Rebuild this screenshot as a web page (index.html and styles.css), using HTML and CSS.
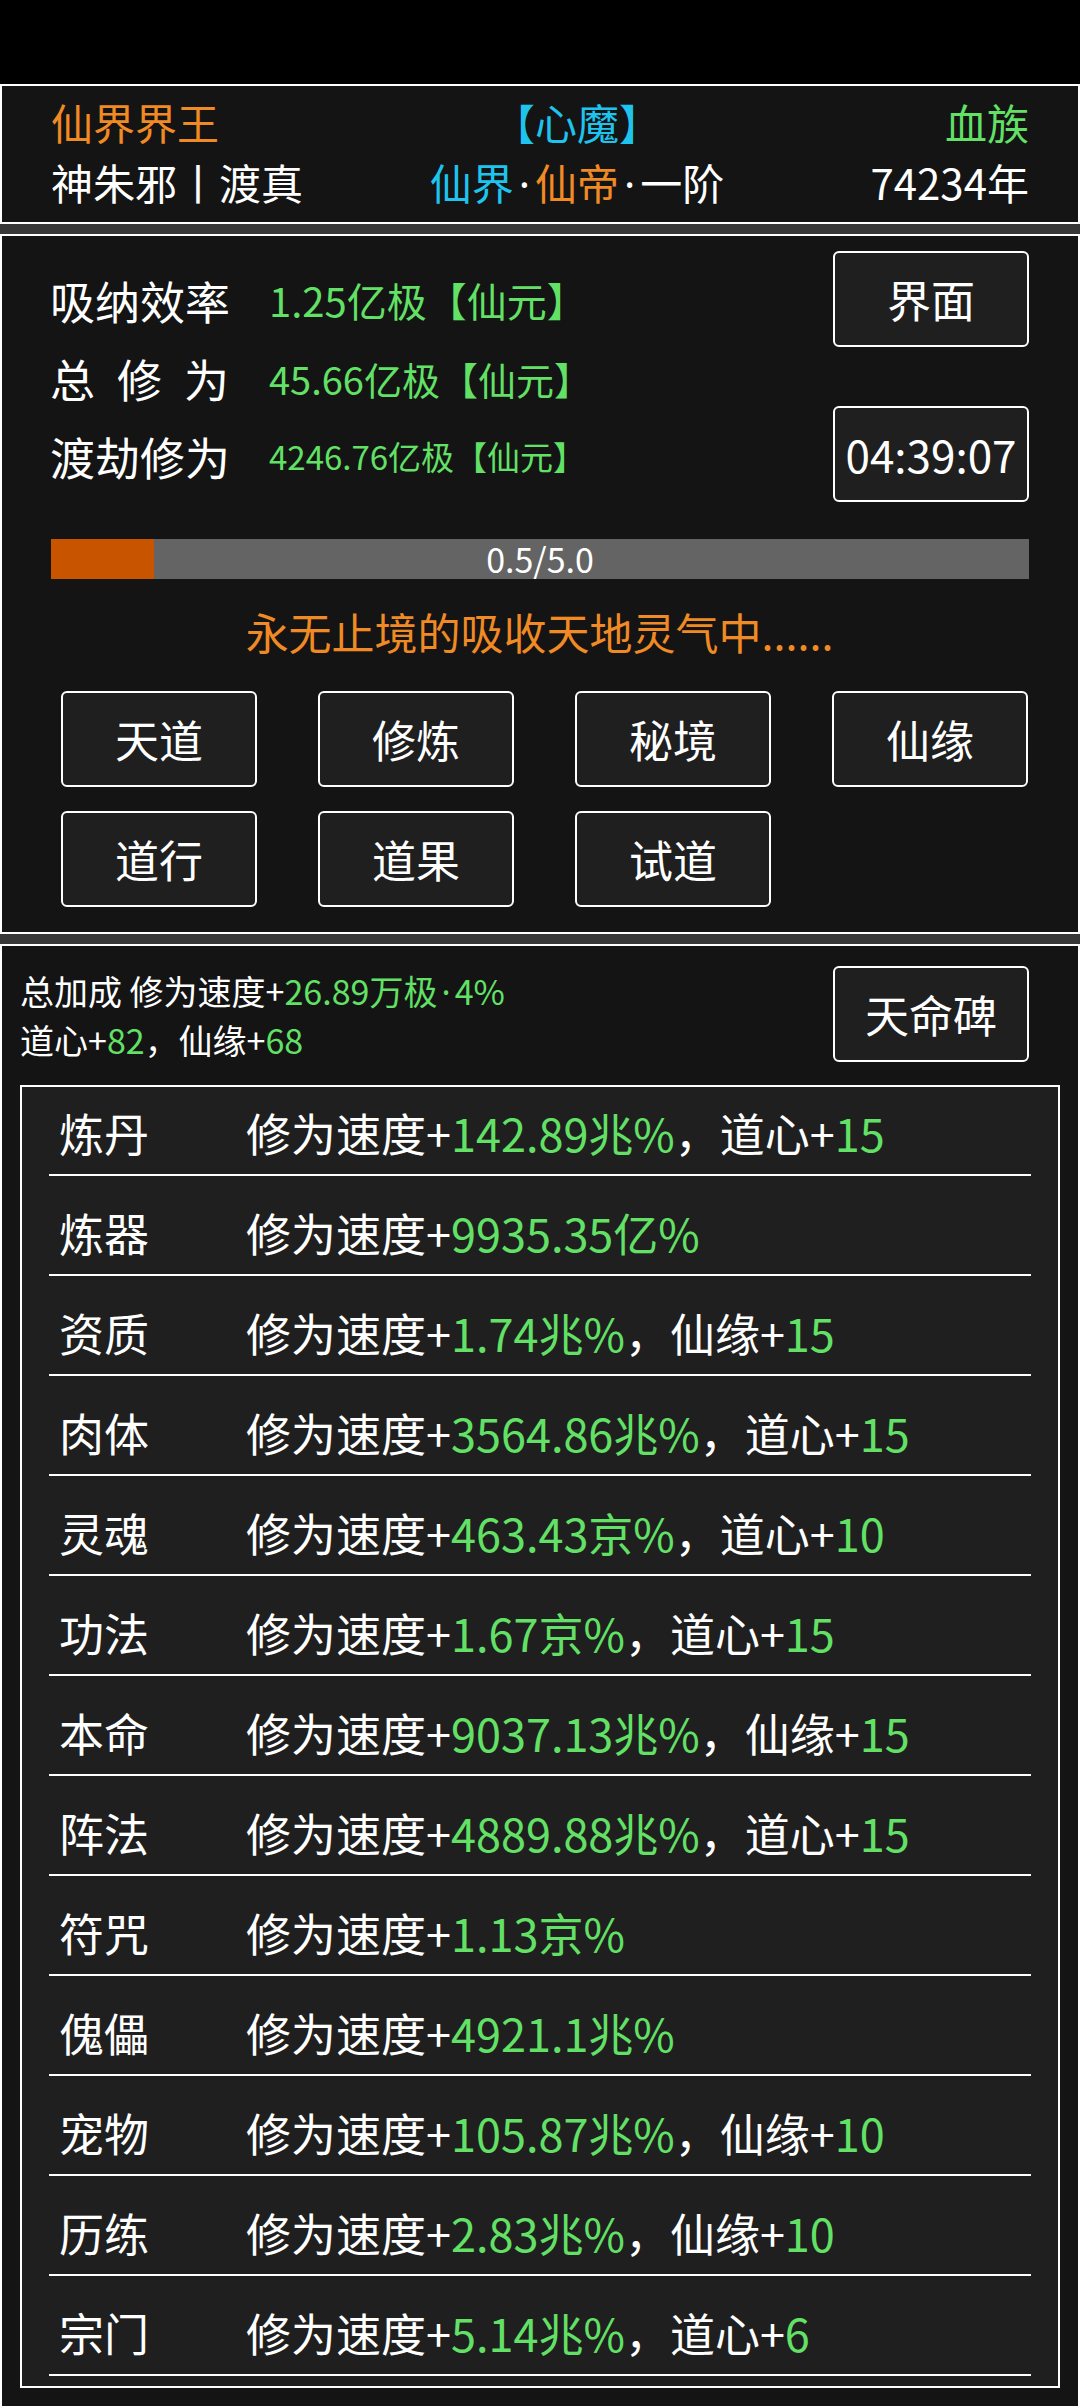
FILE: index.html
```html
<!DOCTYPE html>
<html lang="zh-CN">
<head>
    <meta charset="UTF-8">
    <meta name="viewport" content="width=device-width, initial-scale=1.0">
    <title>修炼</title>
    <link rel="stylesheet" href="styles.css">
</head>
<body>
    <div class="status-space"></div>

    <div class="page">
        <!-- 角色信息 -->
        <div class="panel role-panel">
            <div class="role-row">
                <span class="orange">仙界界王</span>
                <span class="role-mid cyan">【心魔】</span>
                <span class="role-right green">血族</span>
            </div>
            <div class="role-row">
                <span>神朱邪丨渡真</span>
                <span class="role-mid"><span class="cyan">仙界</span><span class="dot">·</span><span class="orange">仙帝</span><span class="dot">·</span>一阶</span>
                <span class="role-right">74234年</span>
            </div>
        </div>

        <!-- 修炼面板 -->
        <div class="panel cultivate-panel">
            <div class="cultivate-top">
                <div class="stats">
                    <div class="stat">
                        <span class="stat-label">吸纳效率</span>
                        <span class="stat-value fit-a">1.25亿极【仙元】</span>
                    </div>
                    <div class="stat">
                        <span class="stat-label spaced">总修为</span>
                        <span class="stat-value fit-b">45.66亿极【仙元】</span>
                    </div>
                    <div class="stat">
                        <span class="stat-label">渡劫修为</span>
                        <span class="stat-value fit-c">4246.76亿极【仙元】</span>
                    </div>
                </div>
                <div class="side-buttons">
                    <button class="btn">界面</button>
                    <button class="btn">04:39:07</button>
                </div>
            </div>

            <div class="progress">
                <div class="progress-fill"></div>
                <span class="progress-text">0.5/5.0</span>
            </div>

            <div class="status-text">永无止境的吸收天地灵气中......</div>

            <div class="action-grid">
                <button class="btn">天道</button>
                <button class="btn">修炼</button>
                <button class="btn">秘境</button>
                <button class="btn">仙缘</button>
                <button class="btn">道行</button>
                <button class="btn">道果</button>
                <button class="btn">试道</button>
            </div>
        </div>

        <!-- 加成列表 -->
        <div class="panel bonus-panel">
            <div class="bonus-head">
                <div class="bonus-sum">
                    <div>总加成 修为速度+<span class="green">26.89万极<span class="dot">·</span>4%</span></div>
                    <div>道心+<span class="green">82</span>，仙缘+<span class="green">68</span></div>
                </div>
                <button class="btn">天命碑</button>
            </div>

            <ul class="bonus-list">
                <li><span class="bonus-name">炼丹</span><span>修为速度+<span class="green">142.89兆%</span>，道心+<span class="green">15</span></span></li>
                <li><span class="bonus-name">炼器</span><span>修为速度+<span class="green">9935.35亿%</span></span></li>
                <li><span class="bonus-name">资质</span><span>修为速度+<span class="green">1.74兆%</span>，仙缘+<span class="green">15</span></span></li>
                <li><span class="bonus-name">肉体</span><span>修为速度+<span class="green">3564.86兆%</span>，道心+<span class="green">15</span></span></li>
                <li><span class="bonus-name">灵魂</span><span>修为速度+<span class="green">463.43京%</span>，道心+<span class="green">10</span></span></li>
                <li><span class="bonus-name">功法</span><span>修为速度+<span class="green">1.67京%</span>，道心+<span class="green">15</span></span></li>
                <li><span class="bonus-name">本命</span><span>修为速度+<span class="green">9037.13兆%</span>，仙缘+<span class="green">15</span></span></li>
                <li><span class="bonus-name">阵法</span><span>修为速度+<span class="green">4889.88兆%</span>，道心+<span class="green">15</span></span></li>
                <li><span class="bonus-name">符咒</span><span>修为速度+<span class="green">1.13京%</span></span></li>
                <li><span class="bonus-name">傀儡</span><span>修为速度+<span class="green">4921.1兆%</span></span></li>
                <li><span class="bonus-name">宠物</span><span>修为速度+<span class="green">105.87兆%</span>，仙缘+<span class="green">10</span></span></li>
                <li><span class="bonus-name">历练</span><span>修为速度+<span class="green">2.83兆%</span>，仙缘+<span class="green">10</span></span></li>
                <li><span class="bonus-name">宗门</span><span>修为速度+<span class="green">5.14兆%</span>，道心+<span class="green">6</span></span></li>
            </ul>
        </div>
    </div>
</body>
</html>
```

FILE: styles.css
```css
body {
    margin: 0;
    background: #000;
    color: #fff;
    font-family: "Noto Sans CJK SC", "Noto Sans", sans-serif;
    font-size: 44px;
    overflow: hidden;
}

.status-space {
    height: 84px;
}

.page {
    display: flex;
    flex-direction: column;
    gap: 10px;
    background: #383838;
}

.panel {
    background: #141414;
    border: 2px solid #fff;
    box-sizing: border-box;
}

.orange { color: #f08a24; }
.cyan { color: #1ec4ee; }
.green { color: #62e166; }

/* 窄间隔点 */
.dot {
    font-family: "Noto Sans", sans-serif;
    margin: 0 0.12em;
}

/* 角色信息 */
.role-panel {
    height: 140px;
    padding: 6px 49px 10px 49px;
    font-size: 42px;
}

.role-row {
    display: grid;
    grid-template-columns: 376px 300px 1fr;
    line-height: 60px;
    white-space: nowrap;
}

.role-mid {
    text-align: center;
}

.role-right {
    text-align: right;
}

/* 修炼面板 */
.cultivate-panel {
    height: 700px;
    padding: 15px 49px 25px 48px;
}

.cultivate-top {
    display: flex;
    justify-content: space-between;
}

.stats {
    padding-top: 10px;
}

.stat {
    display: flex;
    align-items: center;
    height: 78px;
    white-space: nowrap;
}

.stat-label {
    width: 219px;
    font-size: 45px;
}

.stat-label.spaced {
    letter-spacing: 22px;
}

.stat-value {
    color: #62e166;
}

.fit-a { font-size: 40px; }
.fit-b { font-size: 38px; }
.fit-c { font-size: 33px; }

.side-buttons {
    display: flex;
    flex-direction: column;
    gap: 59px;
}

.btn {
    width: 196px;
    height: 96px;
    box-sizing: border-box;
    padding: 0;
    background: #1f1f1f;
    color: #fff;
    border: 2px solid #fff;
    border-radius: 6px;
    font-family: inherit;
    font-size: 44px;
    line-height: 1;
    display: flex;
    align-items: center;
    justify-content: center;
}

.progress {
    position: relative;
    height: 40px;
    margin-top: 37px;
    margin-left: 1px;
    background: #646464;
}

.progress-fill {
    width: 10.5%;
    height: 100%;
    background: #c85400;
}

.progress-text {
    position: absolute;
    left: 0;
    right: 0;
    top: 0;
    line-height: 40px;
    text-align: center;
    font-size: 34px;
}

.status-text {
    margin-top: 22px;
    line-height: 60px;
    text-align: center;
    color: #f08a24;
    font-size: 43px;
}

.action-grid {
    display: grid;
    grid-template-columns: repeat(4, 196px);
    column-gap: 61px;
    row-gap: 24px;
    margin-top: 30px;
    padding-left: 11px;
}

/* 加成列表 */
.bonus-panel {
    height: 1464px;
    padding: 20px 18px 19px 18px;
}

.bonus-head {
    display: flex;
    justify-content: space-between;
    align-items: flex-start;
    padding-right: 31px;
}

.bonus-sum {
    padding-top: 1px;
    font-size: 34px;
    line-height: 47px;
    white-space: nowrap;
}

.bonus-list {
    list-style: none;
    margin: 22px 0 0 0;
    padding: 0 0 10px 0;
    background: #1f1f1f;
    border: 2px solid #fff;
    display: flex;
    flex-direction: column;
    gap: 11px;
}

.bonus-list li {
    display: flex;
    margin: 0 27px;
    padding: 5px 0 0 10px;
    line-height: 82px;
    font-size: 45px;
    border-bottom: 2px solid #fff;
    white-space: nowrap;
}

.bonus-name {
    width: 187px;
    flex-shrink: 0;
}
```
